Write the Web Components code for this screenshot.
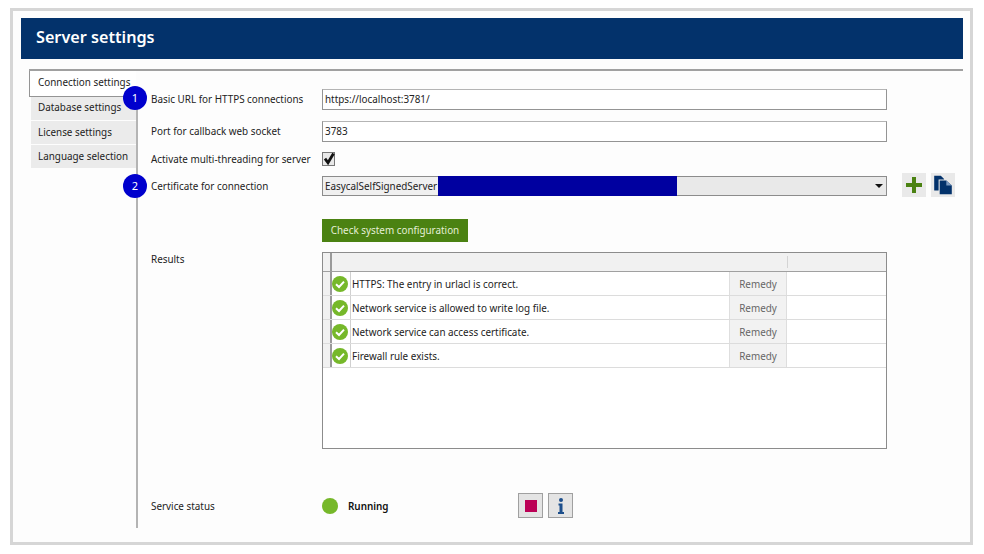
<!DOCTYPE html>
<html>
<head>
<meta charset="utf-8">
<title>Server settings</title>
<style>
  html, body { margin: 0; padding: 0; background: #fff; }
  body { font-family: "Noto Sans", "Open Sans", sans-serif; font-size: 9.9px; line-height: 14px; color: #222; }
</style>
</head>
<body>
<server-settings></server-settings>

<script>
class StepBadge extends HTMLElement {
  constructor() {
    super();
    this.attachShadow({ mode: 'open' });
    this.shadowRoot.innerHTML = `
      <style>
        :host {
          position: absolute;
          left: -28px;
          top: 50%;
          width: 24px;
          height: 24px;
          margin-top: -12px;
          border-radius: 50%;
          background: #0000cd;
          color: #fff;
          font-size: 11px;
          display: flex;
          align-items: center;
          justify-content: center;
        }
      </style>
      <slot></slot>
    `;
  }
}

class SideTab extends HTMLElement {
  constructor() {
    super();
    this.attachShadow({ mode: 'open' });
    this.shadowRoot.innerHTML = `
      <style>
        :host {
          display: flex;
          align-items: center;
          box-sizing: border-box;
          height: 23px;
          margin: 0 2px 1px 2px;
          padding: 0 0 3px 7px;
          background: #ebebeb;
          color: #222;
          white-space: nowrap;
        }
        :host([active]) {
          height: 26px;
          margin: 0 2px 0 0;
          padding: 0 0 3px 8px;
          background: #fff;
          border: 1px solid #949494;
          border-top: 0;
          border-right: 0;
        }
      </style>
      <slot></slot>
    `;
  }
}

class FormRow extends HTMLElement {
  constructor() {
    super();
    this.attachShadow({ mode: 'open' });
    this.shadowRoot.innerHTML = `
      <style>
        :host {
          display: grid;
          grid-template-columns: 171px 565px auto;
          align-items: center;
        }
        .label { position: relative; white-space: nowrap; }
        :host([raised]) .label { margin-bottom: 2px; }
        .field { display: flex; align-items: center; position: relative; }
        .extra { display: flex; gap: 5px; margin: -3px 0 -1px 15px; }
      </style>
      <div class="label"><slot name="badge"></slot><span class="text">${this.getAttribute('label') || ''}</span></div>
      <div class="field"><slot></slot></div>
      <div class="extra"><slot name="extra"></slot></div>
    `;
  }
}

class TextField extends HTMLElement {
  constructor() {
    super();
    this.attachShadow({ mode: 'open' });
    this.shadowRoot.innerHTML = `
      <style>
        :host {
          display: flex;
          align-items: center;
          flex: 1;
          height: 17px;
          padding: 0 2px 2px;
          background: #fff;
          border: 1px solid #949494;
          border-top-color: #b4b4b4;
          color: #222;
        }
      </style>
      <slot></slot>
    `;
  }
}

class CertSelect extends HTMLElement {
  constructor() {
    super();
    this.attachShadow({ mode: 'open' });
    this.shadowRoot.innerHTML = `
      <style>
        :host {
          display: flex;
          align-items: center;
          position: relative;
          flex: 1;
          height: 18px;
          padding: 0 2px;
          background: linear-gradient(to right, #f0f0f0 115px, #e9e9e9 115px);
          border: 1px solid #8c8c8c;
          color: #222;
        }
        .masked {
          position: absolute;
          left: 115px;
          top: -1px;
          width: 239px;
          height: 20px;
          background: #0000a0;
        }
        .arrow {
          position: absolute;
          right: 3px;
          top: 7px;
          width: 0;
          height: 0;
          border: 4px solid transparent;
          border-top: 4px solid #111;
          border-bottom: 0;
        }
      </style>
      <slot></slot>
      <div class="masked"></div>
      <div class="arrow"></div>
    `;
  }
}

class IconButton extends HTMLElement {
  constructor() {
    super();
    this.attachShadow({ mode: 'open' });
    this.shadowRoot.innerHTML = `
      <style>
        :host {
          display: flex;
          align-items: center;
          justify-content: center;
          box-sizing: border-box;
          width: 24px;
          height: 24px;
          background: #e9e9e9;
        }
        :host([framed]) {
          width: 25px;
          height: 25px;
          background: #e4e4e4;
          border: 1px solid #a0a0a0;
        }
      </style>
      <slot></slot>
    `;
  }
}

class ResultRow extends HTMLElement {
  constructor() {
    super();
    this.attachShadow({ mode: 'open' });
    this.shadowRoot.innerHTML = `
      <style>
        :host {
          display: grid;
          grid-template-columns: 7px 2px 18px 1px 378px 58px 1fr;
          height: 24px;
          box-sizing: border-box;
          border-bottom: 1px solid #dcdcdc;
          color: #222;
        }
        .head { background: #f1f1f1; }
        .bar { background: #9a9a9a; }
        .icon { display: flex; align-items: center; justify-content: center; padding-right: 2px; }
        .sep { background: #d0d0d0; }
        .text { display: flex; align-items: center; padding-left: 1px; white-space: nowrap; }
        .remedy {
          display: flex;
          align-items: center;
          justify-content: center;
          background: #f2f2f2;
          border-left: 1px solid #dedede;
          border-right: 1px solid #dedede;
          color: #666;
        }
        svg { display: block; }
      </style>
      <div class="head"></div>
      <div class="bar"></div>
      <div class="icon">
        <svg width="16" height="16" viewBox="0 0 16 16">
          <circle cx="8" cy="8" r="8" fill="#76b82a"/>
          <path d="M4 8.3 L7 11 L12 5.6" fill="none" stroke="#fff" stroke-width="2"/>
        </svg>
      </div>
      <div class="sep"></div>
      <div class="text"><slot></slot></div>
      <div class="remedy">Remedy</div>
      <div></div>
    `;
  }
}

class ResultsTable extends HTMLElement {
  constructor() {
    super();
    this.attachShadow({ mode: 'open' });
    this.shadowRoot.innerHTML = `
      <style>
        :host {
          display: block;
          box-sizing: border-box;
          height: 197px;
          background: #fff;
          border: 1px solid #8c8c8c;
        }
        .head {
          display: grid;
          grid-template-columns: 7px 2px 1fr;
          height: 18px;
          background: #f1f1f1;
          border-bottom: 1px solid #a0a0a0;
        }
        .bar { background: #9a9a9a; }
        .cols { position: relative; }
        .tick { position: absolute; left: 455px; top: 3px; width: 1px; height: 12px; background: #d4d4d4; }
      </style>
      <div class="head">
        <div></div>
        <div class="bar"></div>
        <div class="cols"><div class="tick"></div></div>
      </div>
      <slot></slot>
    `;
  }
}

class ServerSettings extends HTMLElement {
  constructor() {
    super();
    this.attachShadow({ mode: 'open' });
    this.shadowRoot.innerHTML = `
      <style>
        :host {
          display: block;
          box-sizing: border-box;
          width: 963px;
          height: 537px;
          margin: 8px 0 0 10px;
          padding: 7px 7px 0 8px;
          background: #fdfdfd;
          border: 3px solid #d6d6d6;
        }
        header {
          display: flex;
          align-items: center;
          height: 41px;
          padding: 0 0 4px 15px;
          box-sizing: border-box;
          background: #03326b;
          color: #fff;
          font-size: 16.2px;
          font-weight: 600;
        }
        .body {
          display: grid;
          grid-template-columns: 109px 1fr;
          height: 457px;
          margin: 10px 0 0 8px;
          border-top: 2px solid #a0a0a0;
        }
        .tabs { position: relative; }
        .tabs side-tab:nth-of-type(n+3) { padding-bottom: 1px; }
        .rule {
          position: absolute;
          right: 0;
          top: 25px;
          bottom: 0;
          width: 2px;
          background: #b4b4b4;
        }
        .content {
          display: flex;
          flex-direction: column;
          padding: 18px 0 0 13px;
        }
        .first { margin-bottom: 11px; }
        .first step-badge { margin-top: -13px; }
        .check { height: 14px; margin: 10px 0; }
        .box {
          width: 13px;
          height: 14px;
          box-sizing: border-box;
          background: #e8e8e8;
          border: 1px solid #777;
        }
        .box svg { display: block; margin: -2px 0 0 0; }
        .run {
          align-self: flex-start;
          display: flex;
          align-items: center;
          justify-content: center;
          box-sizing: border-box;
          width: 146px;
          height: 23px;
          margin: 23px 0 10px 171px;
          padding-bottom: 1px;
          background: #4b8212;
          color: #e6f0d8;
        }
        .results { display: grid; grid-template-columns: 171px 565px; }
        .status {
          display: grid;
          grid-template-columns: 171px 196px auto;
          align-items: center;
          margin-top: 44px;
        }
        .state { display: flex; align-items: center; gap: 10px; font-weight: 600; font-size: 9.9px; color: #111; }
        .dot { width: 16px; height: 16px; border-radius: 50%; background: #76b82a; }
        .tools { display: flex; gap: 5px; }
      </style>
      <header>Server settings</header>
      <div class="body">
        <nav class="tabs">
          <side-tab active>Connection settings</side-tab>
          <side-tab>Database settings</side-tab>
          <side-tab>License settings</side-tab>
          <side-tab>Language selection</side-tab>
          <div class="rule"></div>
        </nav>
        <main class="content">
          <form-row class="first" raised label="Basic URL for HTTPS connections">
            <step-badge slot="badge">1</step-badge>
            <text-field>https://localhost:3781/</text-field>
          </form-row>
          <form-row raised label="Port for callback web socket">
            <text-field>3783</text-field>
          </form-row>
          <form-row class="check" label="Activate multi-threading for server">
            <div class="box">
              <svg width="13" height="15" viewBox="0 0 13 15">
                <path d="M2 7.7 L5 11.8 L10.5 2.5" fill="none" stroke="#111" stroke-width="2.8"/>
              </svg>
            </div>
          </form-row>
          <form-row label="Certificate for connection">
            <step-badge slot="badge">2</step-badge>
            <cert-select>EasycalSelfSignedServer</cert-select>
            <icon-button slot="extra">
              <svg width="18" height="18" viewBox="0 0 18 18">
                <path d="M7 1 H11 V7 H17 V11 H11 V17 H7 V11 H1 V7 H7 Z" fill="#4b8212"/>
              </svg>
            </icon-button>
            <icon-button slot="extra">
              <svg width="22" height="22" viewBox="0 0 20 20">
                <path d="M2 1.5 H8 L11 4.5 V5 H6 V15 H2 Z" fill="#03326b"/>
                <path d="M7 6 H13 L18 10.5 V18.5 H7 Z" fill="#03326b"/>
                <path d="M13 6 L18 10.5 H13 Z" fill="#7f9cc0"/>
              </svg>
            </icon-button>
          </form-row>
          <div class="run">Check system configuration</div>
          <div class="results">
            <div>Results</div>
            <results-table>
              <result-row>HTTPS: The entry in urlacl is correct.</result-row>
              <result-row>Network service is allowed to write log file.</result-row>
              <result-row>Network service can access certificate.</result-row>
              <result-row>Firewall rule exists.</result-row>
            </results-table>
          </div>
          <div class="status">
            <div>Service status</div>
            <div class="state"><span class="dot"></span>Running</div>
            <div class="tools">
              <icon-button framed>
                <svg width="12" height="12" viewBox="0 0 12 12"><rect width="12" height="12" fill="#bb0055"/></svg>
              </icon-button>
              <icon-button framed>
                <svg width="8" height="16" viewBox="0 0 8 16">
                  <circle cx="4" cy="2" r="2" fill="#1d4f8c"/>
                  <path d="M1.5 5.5 H5.5 V14 H7 V16 H1 V14 H2.5 V7.5 H1.5 Z" fill="#1d4f8c"/>
                </svg>
              </icon-button>
            </div>
          </div>
        </main>
      </div>
    `;
  }
}

customElements.define('step-badge', StepBadge);
customElements.define('side-tab', SideTab);
customElements.define('form-row', FormRow);
customElements.define('text-field', TextField);
customElements.define('cert-select', CertSelect);
customElements.define('icon-button', IconButton);
customElements.define('result-row', ResultRow);
customElements.define('results-table', ResultsTable);
customElements.define('server-settings', ServerSettings);
</script>
</body>
</html>
